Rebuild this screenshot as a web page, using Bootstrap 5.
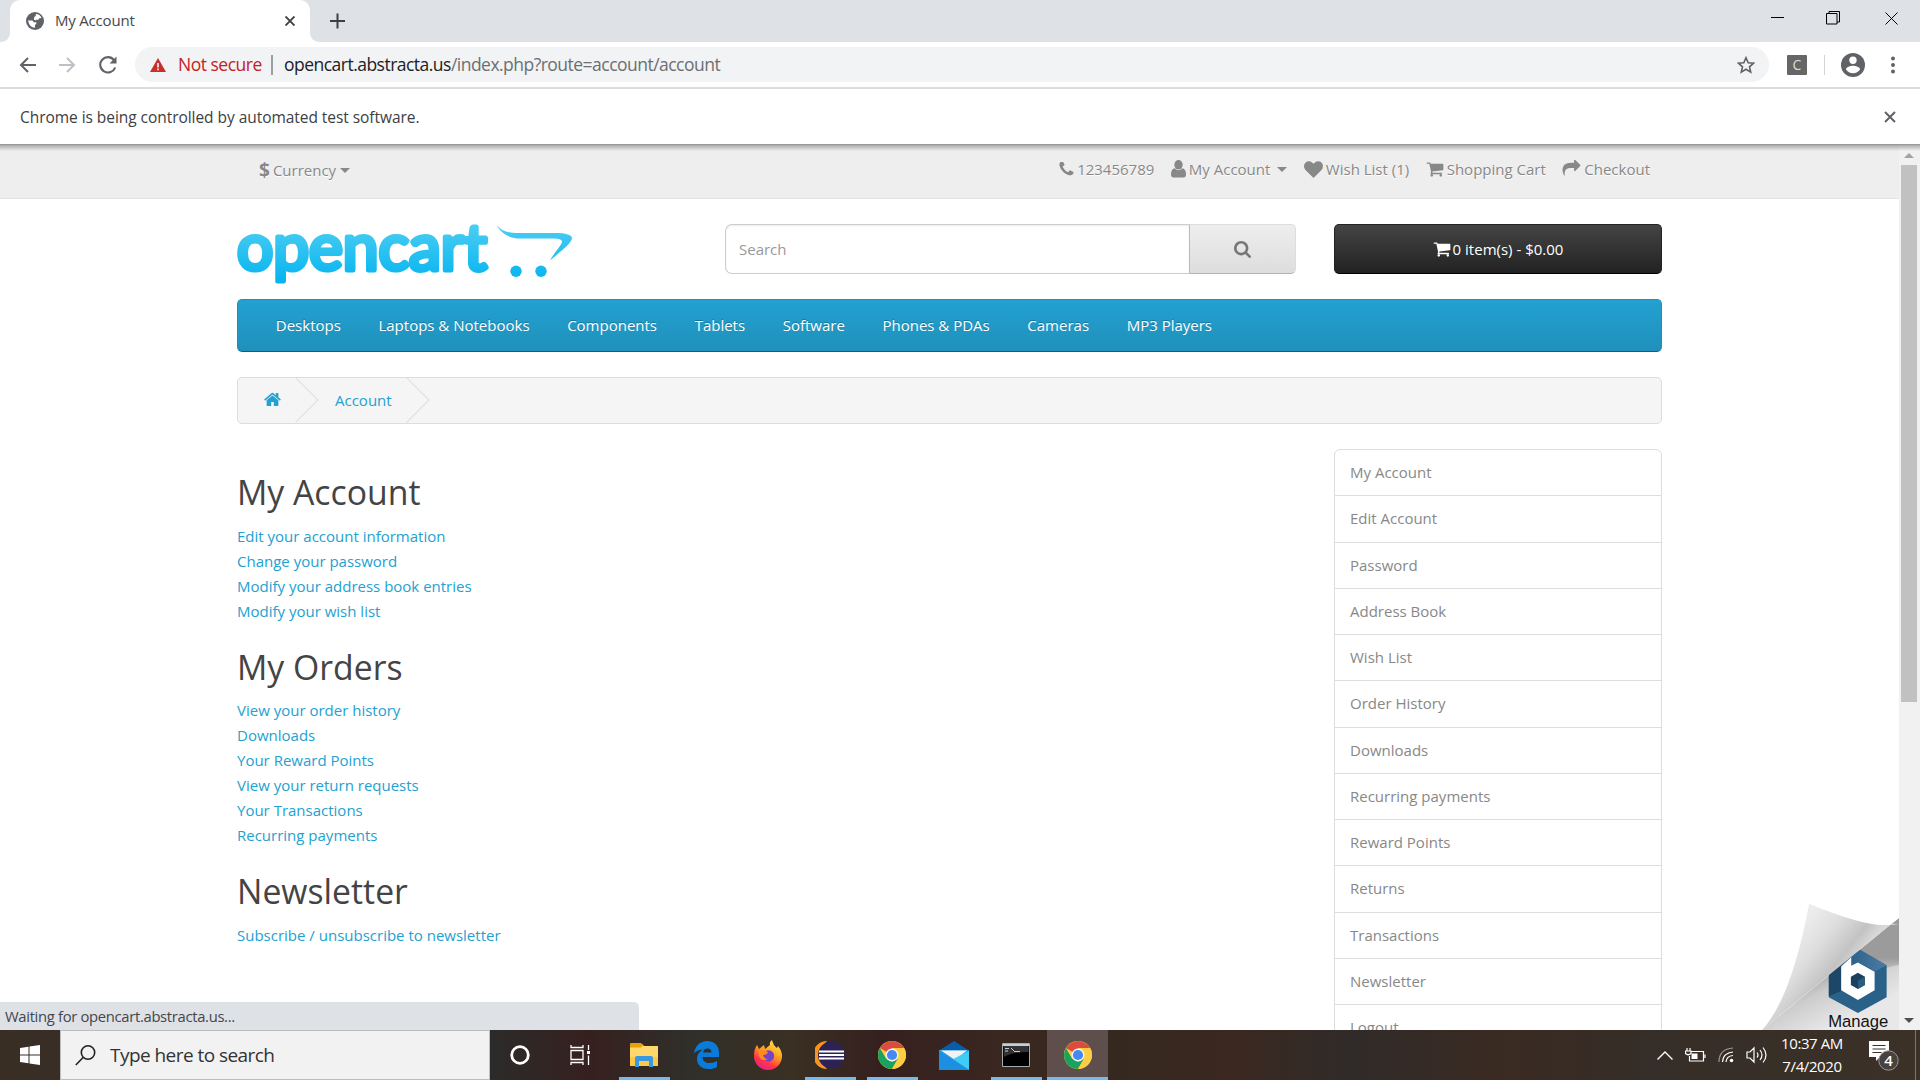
<!DOCTYPE html>
<html lang="en">
<head>
<meta charset="utf-8">
<title>My Account</title>
<link href="https://cdn.jsdelivr.net/npm/bootstrap@5.3.0/dist/css/bootstrap.min.css" rel="stylesheet">
<script src="https://cdn.jsdelivr.net/npm/bootstrap@5.3.0/dist/js/bootstrap.bundle.min.js"></script>
<style>
  body { font-family: "Open Sans", sans-serif; font-size: 15px; line-height: 25px; color: #666; background: #fff; height: 1080px; overflow: hidden; }
  a { text-decoration: none; }
  svg { display: block; flex: none; }
  .fa-ic { fill: currentColor; }

  /* browser frame */
  .tabstrip { height: 42px; background: #dee1e6; }
  .tab-left { width: 10px; height: 42px; background: #fff; }
  .tab-left i { display: block; width: 10px; height: 42px; background: #dee1e6; border-bottom-right-radius: 9px; }
  .tab-right i { border-radius: 0 0 0 9px; }
  .tab-active { width: 300px; height: 42px; background: #fff; border-radius: 10px 10px 0 0; padding: 0 15px 0 16px; color: #45494d; }
  .tab-title { font-size: 15px; letter-spacing: -.2px; margin-left: 11px; padding-bottom: 2px; }
  .new-tab { margin: 13px 0 0 8px; }
  .winbtns span { width: 57px; height: 36px; }
  .toolbar { height: 45px; background: #fff; padding-left: 19px; }
  .nav-ic { margin-left: 23px; }
  .omnibox { height: 35px; border-radius: 18px; background: #f1f3f4; width: 1634px; margin-left: 18px; padding: 0 14px 0 15px; font-size: 17.5px; white-space: nowrap; }
  .insecure { color: #c5221f; letter-spacing: -.5px; margin-left: 12px; width: 84px; }
  .omni-sep { width: 2px; height: 20px; background: #9a9da1; margin: 0 11px 0 9px; }
  .url { color: #6b6f73; letter-spacing: -.52px; }
  .url b { font-weight: 400; color: #202124; }
  .ext { width: 20px; height: 20px; background: #666; color: #ddd; font-size: 14px; line-height: 20px; border-radius: 1px; margin-left: 18px; text-align: center; }
  .ext-sep { width: 1px; height: 20px; background: #d2d4d7; margin: 0 16px 0 17px; }
  .infobar { height: 57px; border-top: 2px solid #dadce0; background: #fff; padding: 0 24px 0 20px; color: #3c4043; font-size: 15.5px; letter-spacing: -.05px; }
  .infobar span { padding-top: 2px; }
  .viewport { height: 886px; border-top: 1px solid #999; }
  .viewport::before { content: ""; position: absolute; left: 0; right: 0; top: 0; height: 6px; background: linear-gradient(#0000004a, #0000); z-index: 3; }

  /* shop page */
  .site { width: 1899px; }
  .topbar { height: 54px; background: #eee; border-bottom: 1px solid #e2e2e2; padding: 0 249px 5px 259px; color: #888; text-shadow: 0 1px 0 #fff; }
  .topbar a, .topbar span { color: #888; }
  .topbar .links { gap: 16.500px; }
  .topbar .links a { gap: 3px; }
  .currency { padding-top: 2px; }
  .currency b { font-size: 19px; margin-right: 3px; }
  .caret { border: 5px solid transparent; border-top-color: #888; border-bottom: 0; display: inline-block; }
  .wrap { width: 1425px; margin-left: 237px; }
  .header-row { height: 100px; padding-top: 25px; }
  .brand { overflow: visible; }
  .search-box { width: 571px; height: 50px; margin-left: 152px; }
  .search-box .form-control { font-size: 15px; border: 1px solid #ccc; border-right: 0; border-radius: 7px 0 0 7px; padding: 0 12px 0 13px; box-shadow: inset 0 1px 2px #00000013; }
  .search-box .form-control::placeholder { color: #999; opacity: 1; }
  .search-btn { width: 107px; border: 1px solid #ddd; border-left-color: #bbb; border-bottom-color: #b3b3b3; border-radius: 0 5px 5px 0; background: linear-gradient(#eee, #ddd); color: #777; }
  .cart-btn { width: 328px; height: 50px; margin-left: 38px; border: 1px solid #222; border-bottom-color: #000; border-radius: 5px; background: linear-gradient(#444, #222); color: #fff; font-size: 15px; gap: 2px; }
  .menu-bar { height: 53px; background: linear-gradient(#23a1d1, #1f90bb); border: 1px solid #1f90bb; border-bottom: 1px solid #145e7a; border-radius: 5px; padding: 0 19px; }
  .menu-bar a { color: #fff; text-shadow: 0 -1px 0 #00000040; padding: 0 18.8px; font-size: 15px; }
  .crumbs { height: 47px; margin: 25px 0; background: #f5f5f5; border: 1px solid #ddd; border-radius: 5px; overflow: hidden; }
  .crumbs a { color: #23a1d1; height: 45px; position: relative; }
  .crumbs a::after { content: ""; position: absolute; right: 8px; top: 6px; width: 32px; height: 32px; border: 1px solid #ddd; border-left: 0; border-bottom: 0; transform: rotate(45deg); }
  .crumb-home { width: 82px; padding-left: 26px; }
  .crumb-acc { width: 111px; padding-left: 15px; }
  .acct { width: 1069px; padding-top: 25px; }
  .acct h2 { font-size: 33.75px; line-height: 37.1px; font-weight: 400; color: #444; margin: 0 0 12.5px; }
  .acct ul { margin: 0 0 25px; }
  .acct a { color: #23a1d1; }
  .side { width: 328px; }
  .side .list-group-item { height: 46.25px; padding: 0 15px; border-color: #ddd; color: #888; font-size: 15px; display: flex; align-items: center; }
  .side .list-group-item:first-child { height: 47.25px; padding-bottom: 1px; }
  .scroll { width: 21px; height: 885px; background: #f1f1f1; padding: 8px 3px 6px 2px; }
  .scroll .thumb { height: 537px; background: #c1c1c1; width: 16px; margin-top: 7px; }
  .statusline { position: absolute; left: 0; bottom: 0; width: 639px; height: 28px; background: #dee1e6; border-top-right-radius: 5px; padding-left: 5px; line-height: 28px; font-size: 14.800px; color: #44474b; letter-spacing: -.32px; z-index: 2; }
  .peel { position: absolute; right: 21px; bottom: 0; z-index: 2; }

  /* taskbar */
  .taskbar { height: 50px; color: #fff; background: linear-gradient(90deg, #3a2e24 0, #382e27 70px, #2c2b2a 490px, #36201f 590px, #302f2a 690px, #3a3023 790px, #35201f 880px, #3a2720 1000px, #35291f 1120px, #3b2820 1230px, #302b29 1350px, #3a2a22 1500px, #352d27 1640px, #3b3127 1899px); }
  .start { width: 60px; height: 50px; }
  .tb-search { width: 430px; height: 50px; background: #f2f2f2; border: 1px solid #bdbdbd; padding-left: 14px; color: #333; font-size: 19px; letter-spacing: -.55px; }
  .tb-search span { margin-left: 14px; }
  .tb-tool { width: 60px; height: 50px; }
  .tb-apps { margin-left: 3px; }
  .tb-item { width: 62px; height: 50px; position: relative; }
  .tb-item.open::after { content: ""; position: absolute; bottom: 0; left: 6px; width: 51px; height: 3px; background: #76b9ed; }
  .tb-item.current { width: 61px; background: #5e4f4d; }
  .tb-item.current::after { left: 0; width: 61px; }
  .tray { gap: 12px; }
  .clock { font-size: 15px; line-height: 23px; text-align: center; width: 70px; letter-spacing: -.4px; white-space: nowrap; margin-left: -2px; }
  .notif { margin-left: 10px; }
  .peek { width: 1px; height: 50px; background: #777; margin: 0 4px 0 3px; }
</style>
</head>
<body class="d-flex flex-column">
<svg width="0" height="0" class="position-absolute">
  <defs>
    <symbol id="cart" viewBox="0 0 1792 1792"><path d="M704 1536q0 52-38 90t-90 38-90-38-38-90 38-90 90-38 90 38 38 90zm896 0q0 52-38 90t-90 38-90-38-38-90 38-90 90-38 90 38 38 90zm128-1088v512q0 24-16.500 42.500t-40.500 21.500l-1044 122q13 60 13 70 0 16-24 64h920q26 0 45 19t19 45-19 45-45 19h-1024q-26 0-45-19t-19-45q0-11 8-31.500t16-36 21.500-40 15.500-29.500l-177-823h-204q-26 0-45-19t-19-45 19-45 45-19h256q16 0 28.500 6.500t19.500 15.500 13 24.500 8 26 5.500 29.500 4.500 26h1201q26 0 45 19t19 45z"/></symbol>
    <symbol id="chrome" viewBox="0 0 28 28">
      <circle cx="14" cy="14" r="14" fill="#fc4"/>
      <path d="M14 14 1.900 7A14 14 0 0 1 26.100 7H14z" fill="#db4b3e"/>
      <path d="M1.900 7A14 14 0 0 0 14 28L20 17.500 14 20.500 8 17.500z" fill="#1aa35e"/>
      <path d="M14 7H26.100A14 14 0 0 1 14 28L20.500 17z" fill="#ffcd40"/>
      <circle cx="14" cy="14" r="6.500" fill="#f4f4f4"/><circle cx="14" cy="14" r="5.100" fill="#4688f4"/>
    </symbol>
  </defs>
</svg>

<div class="tabstrip d-flex">
  <div class="tab-left"><i></i></div>
  <div class="tab-active d-flex align-items-center">
    <svg width="18" height="18" viewBox="0 0 18 18"><circle cx="9" cy="9" r="9" fill="#5f6368"/><path d="M2 8.500h4.500l1.200 1.700h2.600v1.600l-1.300 1.300v2.700Q3.500 15.800 2 8.500zM8.200 5.200l1.600-1.500V2Q14 2 15.500 6l-2.300.3-1 1.600-1.700-.4-.9 1.100-1.700-1.200z" fill="#fff"/></svg>
    <span class="tab-title">My Account</span>
    <svg class="ms-auto" width="10" height="10" viewBox="0 0 10 10" stroke="#3c4043" stroke-width="1.900"><path d="M.5.5l9 9M9.500.5l-9 9"/></svg>
  </div>
  <div class="tab-left tab-right"><i></i></div>
  <svg class="new-tab" width="19" height="16" viewBox="0 0 19 16" stroke="#3c4043" stroke-width="2"><path d="M9.500 .5v15M2 8h15"/></svg>
  <div class="winbtns d-flex ms-auto">
    <span class="d-flex align-items-center justify-content-center"><svg width="13" height="13" stroke="#000"><path d="M0 5.500h13"/></svg></span>
    <span class="d-flex align-items-center justify-content-center pe-1"><svg width="14" height="14" fill="none" stroke="#000"><path d="M.5 2.500h10.500v10.500H.5zM3 2.500V.5h10.500v10.500H11"/></svg></span>
    <span class="d-flex align-items-center justify-content-center"><svg width="13" height="13" stroke="#000"><path d="M.5.5l12 12M12.500.5l-12 12"/></svg></span>
  </div>
</div>

<div class="toolbar d-flex align-items-center">
  <svg width="17" height="16" viewBox="0 0 17 16" fill="none" stroke="#5f6368" stroke-width="2"><path d="M17 8H2M9 1L2 8l7 7"/></svg>
  <svg class="nav-ic" width="17" height="16" viewBox="0 0 17 16" fill="none" stroke="#bdc1c6" stroke-width="2"><path d="M0 8h15M8 1l7 7-7 7"/></svg>
  <svg class="nav-ic" width="18" height="18" viewBox="0 0 18 18" fill="none" stroke="#5f6368" stroke-width="2.100"><path d="M15 4A7.700 7.700 0 1 0 16.200 11.500"/><path d="M17.500 .5v7h-7z" fill="#5f6368" stroke="none"/></svg>
  <div class="omnibox d-flex align-items-center">
    <svg width="16" height="14" viewBox="0 0 16 14"><path d="M8 0l8 14H0z" fill="#c5302a"/><path d="M8 5v4.500M8 10.500v1.700" stroke="#fff" stroke-width="1.500"/></svg>
    <span class="insecure">Not secure</span><span class="omni-sep"></span>
    <span class="url"><b>opencart.abstracta.us</b>/index.php?route=account/account</span>
    <svg class="ms-auto" width="18" height="18" viewBox="0 0 18 18" fill="none" stroke="#5f6368" stroke-width="1.600"><path d="M9 1.700l2.200 5 5.400.5-4.100 3.600 1.200 5.300L9 13.300l-4.700 2.800 1.200-5.300L1.400 7.200l5.400-.5z"/></svg>
  </div>
  <span class="ext">C</span><span class="ext-sep"></span>
  <svg width="24" height="24" viewBox="0 0 24 24"><circle cx="12" cy="12" r="12" fill="#5f6368"/><circle cx="12" cy="7.300" r="3.700" fill="#fff"/><path d="M5 16.500c0-2.600 4.600-3.700 7-3.700s7 1.100 7 3.700c-1.500 2.300-4 3.700-7 3.700s-5.500-1.400-7-3.700z" fill="#fff"/></svg>
  <svg style="margin-left:26px" width="4" height="18" fill="#5f6368"><circle cx="2" cy="2.500" r="2"/><circle cx="2" cy="9" r="2"/><circle cx="2" cy="15.500" r="2"/></svg>
</div>
<div class="infobar d-flex align-items-center">
  <span>Chrome is being controlled by automated test software.</span>
  <svg class="ms-auto" width="12" height="12" viewBox="0 0 12 12" stroke="#5f6368" stroke-width="2"><path d="M1 1l10 10M11 1L1 11"/></svg>
</div>

<div class="viewport position-relative d-flex overflow-hidden">
  <div class="site">
    <div class="topbar d-flex align-items-center justify-content-between">
      <span class="currency d-flex align-items-center"><b>$</b>Currency<i class="caret ms-1"></i></span>
      <div class="links d-flex">
        <a href="#" class="d-flex align-items-center"><svg class="fa-ic" width="15" height="15" viewBox="150 200 1500 1500"><path d="M1600 1240q0 27-10 70.500t-21 68.500q-21 50-122 106-94 51-186 51-27 0-53-3.500t-57.500-12.500-47-14.500-55.500-20.500-49-18q-98-35-175-83-127-79-264-216t-216-264q-48-77-83-175-3-9-18-49t-20.500-55.500-14.500-47-12.500-57.500-3.500-53q0-92 51-186 56-101 106-122 25-11 68.500-21t70.500-10q14 0 21 3 18 6 53 76 11 19 30 54t35 63.500 31 53.500q3 4 17.500 25t21.500 35.500 7 28.500q0 20-28.500 50t-62 55-62 53-28.500 46q0 9 5 22.500t8.500 20.500 14 24 11.500 19q76 137 174 235t235 174q2 1 19 11.500t24 14 20.500 8.500 22.500 5q18 0 46-28.500t53-62 55-62 50-28.500q14 0 28.500 7t35.500 21.500 25 17.500q25 15 53.500 31t63.500 35 54 30q70 35 76 53 3 7 3 21z"/></svg>123456789</a>
        <a href="#" class="d-flex align-items-center"><svg class="fa-ic" width="15" height="18" viewBox="0 0 15 18"><ellipse cx="7.500" cy="4.800" rx="4.200" ry="4.800"/><path d="M3.500 8.300Q7.500 12 11.500 8.300 15 9 15 14.500 15 17.500 12.500 17.500H2.500Q0 17.500 0 14.500 0 9 3.500 8.300z"/></svg>My Account<i class="caret ms-1"></i></a>
        <a href="#" class="d-flex align-items-center"><svg class="fa-ic" width="19" height="19" viewBox="0 0 1792 1792"><path d="M896 1664q-26 0-44-18l-624-602q-10-8-27.500-26t-55.500-65.500-68-97.500-53.500-121-23.500-138q0-220 127-344t351-124q62 0 126.500 21.500t120 58 95.500 68.500 76 68q36-36 76-68t95.500-68.500 120-58 126.500-21.500q224 0 351 124t127 344q0 221-229 450l-623 600q-18 18-44 18z"/></svg>Wish List (1)</a>
        <a href="#" class="d-flex align-items-center"><svg class="fa-ic" width="18" height="18"><use href="#cart"/></svg>Shopping Cart</a>
        <a href="#" class="d-flex align-items-center"><svg class="fa-ic" width="19" height="18" viewBox="0 100 1792 1792"><path d="M1792 640q0 26-19 45l-512 512q-19 19-45 19t-45-19-19-45v-256h-224q-98 0-175.500 6t-154 21.500-133 42.500-105.500 69.500-80 101-48.500 138.500-17.500 181q0 55 5 123 0 6 2.500 23.500t2.500 26.500q0 15-8.500 25t-23.500 10q-16 0-28-17-7-9-13-22t-13.500-30-10.500-24q-127-285-127-451 0-199 53-333 162-403 875-403h224v-256q0-26 19-45t45-19 45 19l512 512q19 19 19 45z"/></svg>Checkout</a>
      </div>
    </div>

    <div class="wrap">
      <div class="header-row d-flex">
        <svg class="brand" width="336" height="64" viewBox="237 224 336 64" role="img">
          <defs><linearGradient id="lg" gradientUnits="userSpaceOnUse" x1="0" y1="226" x2="0" y2="286"><stop offset="0" stop-color="#4acdf2"/><stop offset="1" stop-color="#00b2f0"/></linearGradient></defs>
          <text x="237" y="270" font-family="Lato" font-weight="400" font-size="64" textLength="250" lengthAdjust="spacingAndGlyphs" fill="url(#lg)" stroke="url(#lg)" stroke-width="5" stroke-linejoin="round">opencart</text>
          <path d="M496.500 224.500C501 231 508 233 517 233H555C566 233 572 235 572 238 572 243 560 252 550 260.500 554 253 562 245 562 241.500 562 239 557 238.500 551 238.500L521 238.500C510 238.500 501 234 496.500 224.500z" fill="url(#lg)"/>
          <circle cx="516" cy="271.300" r="5.700" fill="url(#lg)"/><circle cx="541" cy="271.300" r="5.700" fill="url(#lg)"/>
        </svg>
        <div class="search-box d-flex">
          <input class="form-control" type="text" placeholder="Search">
          <button class="search-btn d-flex align-items-center justify-content-center flex-shrink-0"><svg class="fa-ic" width="17" height="17" viewBox="64 128 1664 1664"><path d="M1216 832q0-185-131.500-316.500t-316.500-131.500-316.500 131.500-131.500 316.500 131.500 316.500 316.500 131.500 316.500-131.500 131.500-316.500zm512 832q0 52-38 90t-90 38q-54 0-90-38l-343-342q-179 124-399 124-143 0-273.500-55.500t-225-150-150-225-55.500-273.500 55.500-273.500 150-225 225-150 273.500-55.500 273.500 55.500 225 150 150 225 55.500 273.500q0 220-124 399l343 343q37 37 37 90z"/></svg></button>
        </div>
        <button class="cart-btn d-flex align-items-center justify-content-center"><svg class="fa-ic" width="18" height="18"><use href="#cart"/></svg>0 item(s) - $0.00</button>
      </div>
      <nav class="menu-bar d-flex align-items-center">
        <a href="#">Desktops</a><a href="#">Laptops &amp; Notebooks</a><a href="#">Components</a><a href="#">Tablets</a><a href="#">Software</a><a href="#">Phones &amp; PDAs</a><a href="#">Cameras</a><a href="#">MP3 Players</a>
      </nav>
      <div class="crumbs d-flex">
        <a href="#" class="crumb-home d-flex align-items-center"><svg class="fa-ic" width="17" height="17" viewBox="64 170 1664 1664"><path d="M1472 992v480q0 26-19 45t-45 19h-384v-384h-256v384h-384q-26 0-45-19t-19-45v-480q0-1 .5-3t.5-3l575-474 575 474q1 2 1 6zm223-69l-62 74q-8 9-21 11h-3q-13 0-21-7l-692-577-692 577q-12 8-24 7-13-2-21-11l-62-74q-8-10-7-23.500t11-21.500l719-599q32-26 76-26t76 26l244 204v-195q0-14 9-23t23-9h192q14 0 23 9t9 23v408l219 182q10 8 11 21.500t-7 23.500z"/></svg></a>
        <a href="#" class="crumb-acc d-flex align-items-center">Account</a>
      </div>
      <div class="d-flex justify-content-between">
        <div class="acct">
          <h2>My Account</h2>
          <ul class="list-unstyled">
            <li><a href="#">Edit your account information</a></li><li><a href="#">Change your password</a></li><li><a href="#">Modify your address book entries</a></li><li><a href="#">Modify your wish list</a></li>
          </ul>
          <h2>My Orders</h2>
          <ul class="list-unstyled">
            <li><a href="#">View your order history</a></li><li><a href="#">Downloads</a></li><li><a href="#">Your Reward Points</a></li><li><a href="#">View your return requests</a></li><li><a href="#">Your Transactions</a></li><li><a href="#">Recurring payments</a></li>
          </ul>
          <h2>Newsletter</h2>
          <ul class="list-unstyled"><li><a href="#">Subscribe / unsubscribe to newsletter</a></li></ul>
        </div>
        <div class="side list-group">
          <a href="#" class="list-group-item">My Account</a><a href="#" class="list-group-item">Edit Account</a><a href="#" class="list-group-item">Password</a><a href="#" class="list-group-item">Address Book</a><a href="#" class="list-group-item">Wish List</a><a href="#" class="list-group-item">Order History</a><a href="#" class="list-group-item">Downloads</a><a href="#" class="list-group-item">Recurring payments</a><a href="#" class="list-group-item">Reward Points</a><a href="#" class="list-group-item">Returns</a><a href="#" class="list-group-item">Transactions</a><a href="#" class="list-group-item">Newsletter</a><a href="#" class="list-group-item">Logout</a>
        </div>
      </div>
    </div>
  </div>
  <div class="scroll d-flex flex-column">
    <svg width="16" height="5"><path d="M3 5l5-5 5 5z" fill="#a3a3a3"/></svg>
    <div class="thumb"></div>
    <svg class="mt-auto" width="16" height="6"><path d="M3 0h10L8 5z" fill="#505050"/></svg>
  </div>

  <svg class="peel" width="137" height="127" viewBox="427 70 410 380">
    <defs>
      <linearGradient id="fold" gradientUnits="userSpaceOnUse" x1="510" y1="180" x2="660" y2="300"><stop offset="0" stop-color="#ececec"/><stop offset=".4" stop-color="#dedede"/><stop offset=".8" stop-color="#c3c3c3"/><stop offset="1" stop-color="#d8d8d8"/></linearGradient>
      <linearGradient id="under" gradientUnits="userSpaceOnUse" x1="640" y1="240" x2="720" y2="400"><stop offset="0" stop-color="#999"/><stop offset=".4" stop-color="#ccc"/><stop offset="1" stop-color="#e8e8e8"/></linearGradient>
      <linearGradient id="shade" x1="0" y1="0" x2="0" y2="1"><stop offset=".7" stop-color="#9b9b9b"/><stop offset="1" stop-color="#9b9b9b" stop-opacity="0"/></linearGradient>
      <linearGradient id="hexlit" x1="0" x2="1"><stop offset="0" stop-color="#235a85"/><stop offset="1" stop-color="#4d7ca2"/></linearGradient>
    </defs>
    <path d="M837 115V450H427z" fill="url(#under)"/>
    <path d="M837 115V255L720 285V210z" fill="url(#shade)"/>
    <path d="M720 210l80 46v96l-86 47-87-47v-82z" fill="#2a6189"/>
    <path d="M720 210l80 46-34 18-52-27-34 18-20 0z" fill="url(#hexlit)"/>
    <path d="M627 275l37-24v82l-37 16z" fill="#1c4767"/>
    <path d="M664 260l30-28v26l20-10 50 28v55l-50 29-50-29z" fill="#fff"/>
    <path d="M714 279l21 12v24l-21 12-21-12v-24z" fill="#1b4160"/><path d="M714 303l21-12v24l-21 12z" fill="#2e5c7e"/>
    <path d="M568 72Q760 150 837 133L815 132 427 450Q515 355 568 72z" fill="url(#fold)"/>
    <path d="M568 72Q765 152 815 132L837 115V70H568z" fill="#fff"/>
    <text x="625" y="441" font-family="Liberation Sans" font-size="48" textLength="180" lengthAdjust="spacingAndGlyphs" fill="#111">Manage</text>
  </svg>
  <div class="statusline">Waiting for opencart.abstracta.us...</div>
</div>

<div class="taskbar d-flex align-items-center">
  <div class="start d-flex align-items-center justify-content-center"><svg width="20" height="20" fill="#fff"><path d="M0 3l8.500-1.200v7.700H0zM9.500 1.600L20 0v9.500H9.500zM0 10.500h8.500v7.700L0 17zM9.500 10.500H20V20l-10.500-1.500z"/></svg></div>
  <div class="tb-search d-flex align-items-center">
    <svg width="21" height="21" fill="none" stroke="#222" stroke-width="1.600"><circle cx="13" cy="7.500" r="6.700"/><path d="M8.300 12.300L.8 20"/></svg>
    <span>Type here to search</span>
  </div>
  <div class="tb-tool d-flex align-items-center justify-content-center"><svg width="20" height="20"><circle cx="10" cy="10" r="8.300" fill="none" stroke="#fff" stroke-width="2.800"/></svg></div>
  <div class="tb-tool d-flex align-items-center justify-content-center"><svg width="21" height="20" fill="none" stroke="#fff" stroke-width="1.300"><path d="M1 5.500h12v9H1zM1 0v2.500h12V0M1 20v-2.500h12V20M18.500 0v5M18.500 10.500V20"/><path d="M17 6h3v3h-3z" fill="#fff" stroke="none"/></svg></div>
  <div class="tb-apps d-flex">
    <div class="tb-item open d-flex align-items-center justify-content-center"><svg width="28" height="25" viewBox="0 0 28 25"><path d="M0 1h12l2 2h14v20H0z" fill="#ffd76a"/><path d="M0 1q0-1 1-1h10l2 2-2 2.500H0z" fill="#e5a00d"/><path d="M0 14h28v9H0z" fill="#fcc845"/><path d="M5 24V15q0-2 2-2h14q2 0 2 2v9h-4v-6H9v6z" fill="#3a98de"/></svg></div>
    <div class="tb-item d-flex align-items-center justify-content-center"><svg width="25" height="28" viewBox="0 0 25 28"><path d="M0 12.500C1 5 6 0 13 0c8 0 12 5.500 12 12v4H8.500c.2 4 3 6 7 6 3 0 5.300-.8 7.500-2v6c-2.500 1.400-5 2-8.500 2C7 28 3 23.500 3 18c0-4.500 2.500-7.500 6-9.500-5 .5-7.500 2-9 4zM9 11.500h8.500C17.500 9 16 7.500 13.500 7.500 11 7.500 9.500 9 9 11.500z" fill="#0a7bdb"/></svg></div>
    <div class="tb-item d-flex align-items-center justify-content-center"><svg width="28" height="30" viewBox="0 0 28 30"><defs><linearGradient id="ff" x1=".8" y1="0" x2=".3" y2="1"><stop offset="0" stop-color="#fff04a"/><stop offset=".45" stop-color="#ff9a20"/><stop offset=".75" stop-color="#ff3547"/><stop offset="1" stop-color="#e61e8c"/></linearGradient></defs><path d="M3 5l2 4 5-4 1 4 5-4q-1-3 2-5 1 5 5 8l1-2q4 5 4 10a14 14 0 0 1-28 0Q0 9 3 5z" fill="url(#ff)"/><circle cx="14.500" cy="16" r="5.700" fill="#7542c9"/><path d="M4 11q5-2 10 1-1 3-5 3 1 4 5 4-6 3-9-3z" fill="#ff8a20"/></svg></div>
    <div class="tb-item open d-flex align-items-center justify-content-center"><svg width="30" height="28" viewBox="0 0 30 28"><path d="M12 0A14 14 0 0 0 12 28Q-1 14 12 0z" fill="#f7941e"/><circle cx="16.500" cy="14" r="13.500" fill="#2c2255"/><path d="M4 10.500h25M4 14h25M4 17.500h25" stroke="#fff" stroke-width="1.900"/></svg></div>
    <div class="tb-item open d-flex align-items-center justify-content-center"><svg width="28" height="28"><use href="#chrome"/></svg></div>
    <div class="tb-item d-flex align-items-center justify-content-center"><svg width="30" height="29" viewBox="0 0 30 29"><path d="M0 9.500L15 0l15 9.500z" fill="#0a5ba8"/><path d="M0 9h30v20H0z" fill="#249ce4"/><path d="M2 9.500h26L16 19z" fill="#f2f2f2"/><path d="M30 10v19L14 18z" fill="#40cdf4"/><path d="M0 10l30 19H0z" fill="#1d8fe0"/></svg></div>
    <div class="tb-item open d-flex align-items-center justify-content-center"><svg width="28" height="24" viewBox="0 0 28 24"><path d="M.5.500h27v23H.5z" fill="#000" stroke="#a3adb1"/><path d="M1 1h26v2H1z" fill="#bfd0d8"/><path d="M1.500 3h25v6Q10 9 2 14z" fill="#333"/><path d="M3 5.500h4M3 8h3M9 5l3 3M12 8.500h6" stroke="#ccc"/></svg></div>
    <div class="tb-item open current d-flex align-items-center justify-content-center"><svg width="28" height="28"><use href="#chrome"/></svg></div>
  </div>

  <div class="tray ms-auto d-flex align-items-center">
    <svg width="16" height="9" fill="none" stroke="#fff" stroke-width="1.400"><path d="M.5 8.500L8 1l7.500 7.500"/></svg>
    <svg width="21" height="15" fill="none" stroke="#fff" stroke-width="1.200"><path d="M6 3.500h12.500v9.500H4.500V8M2 0v3M5 0v3M.5 3h5.500v2.500Q3 8 .5 5.500zM20 6.500v3.500"/><path d="M6.500 5.500h6v5.500h-6z" fill="#fff" stroke="none"/></svg>
    <svg width="16" height="16" fill="none" stroke="#fff" stroke-width="1.200"><path d="M1 15Q1 2 15 1" opacity=".5"/><path d="M4.500 15Q5 6 15 5M8 15q.5-6 7-6.500"/><circle cx="13.500" cy="13.500" r="1.800" fill="#fff" stroke="none"/></svg>
    <svg width="21" height="18" fill="none" stroke="#fff" stroke-width="1.200"><path d="M1 6h3l4-4v14l-4-4H1zM11 6.500q2 2.500 0 5M14 4q4 5 0 10M17 1.500q6 7.500 0 15"/></svg>
    <div class="clock">10:37 AM<br>7/4/2020</div>
    <svg class="notif" width="31" height="32" viewBox="0 0 31 32"><path d="M0 2h20v16h-9l-4 4v-4H0z" fill="#fff"/><path d="M3.500 6.500h13M3.500 10h13M3.500 13.500h9" stroke="#3a3027" stroke-width="1.200"/><circle cx="19.500" cy="21.500" r="9.700" fill="#474240" stroke="#999"/><text x="19.500" y="27" text-anchor="middle" font-family="Open Sans" font-size="15" font-weight="600" fill="#fff">4</text></svg>
    <span class="peek"></span>
  </div>
</div>
</body>
</html>
